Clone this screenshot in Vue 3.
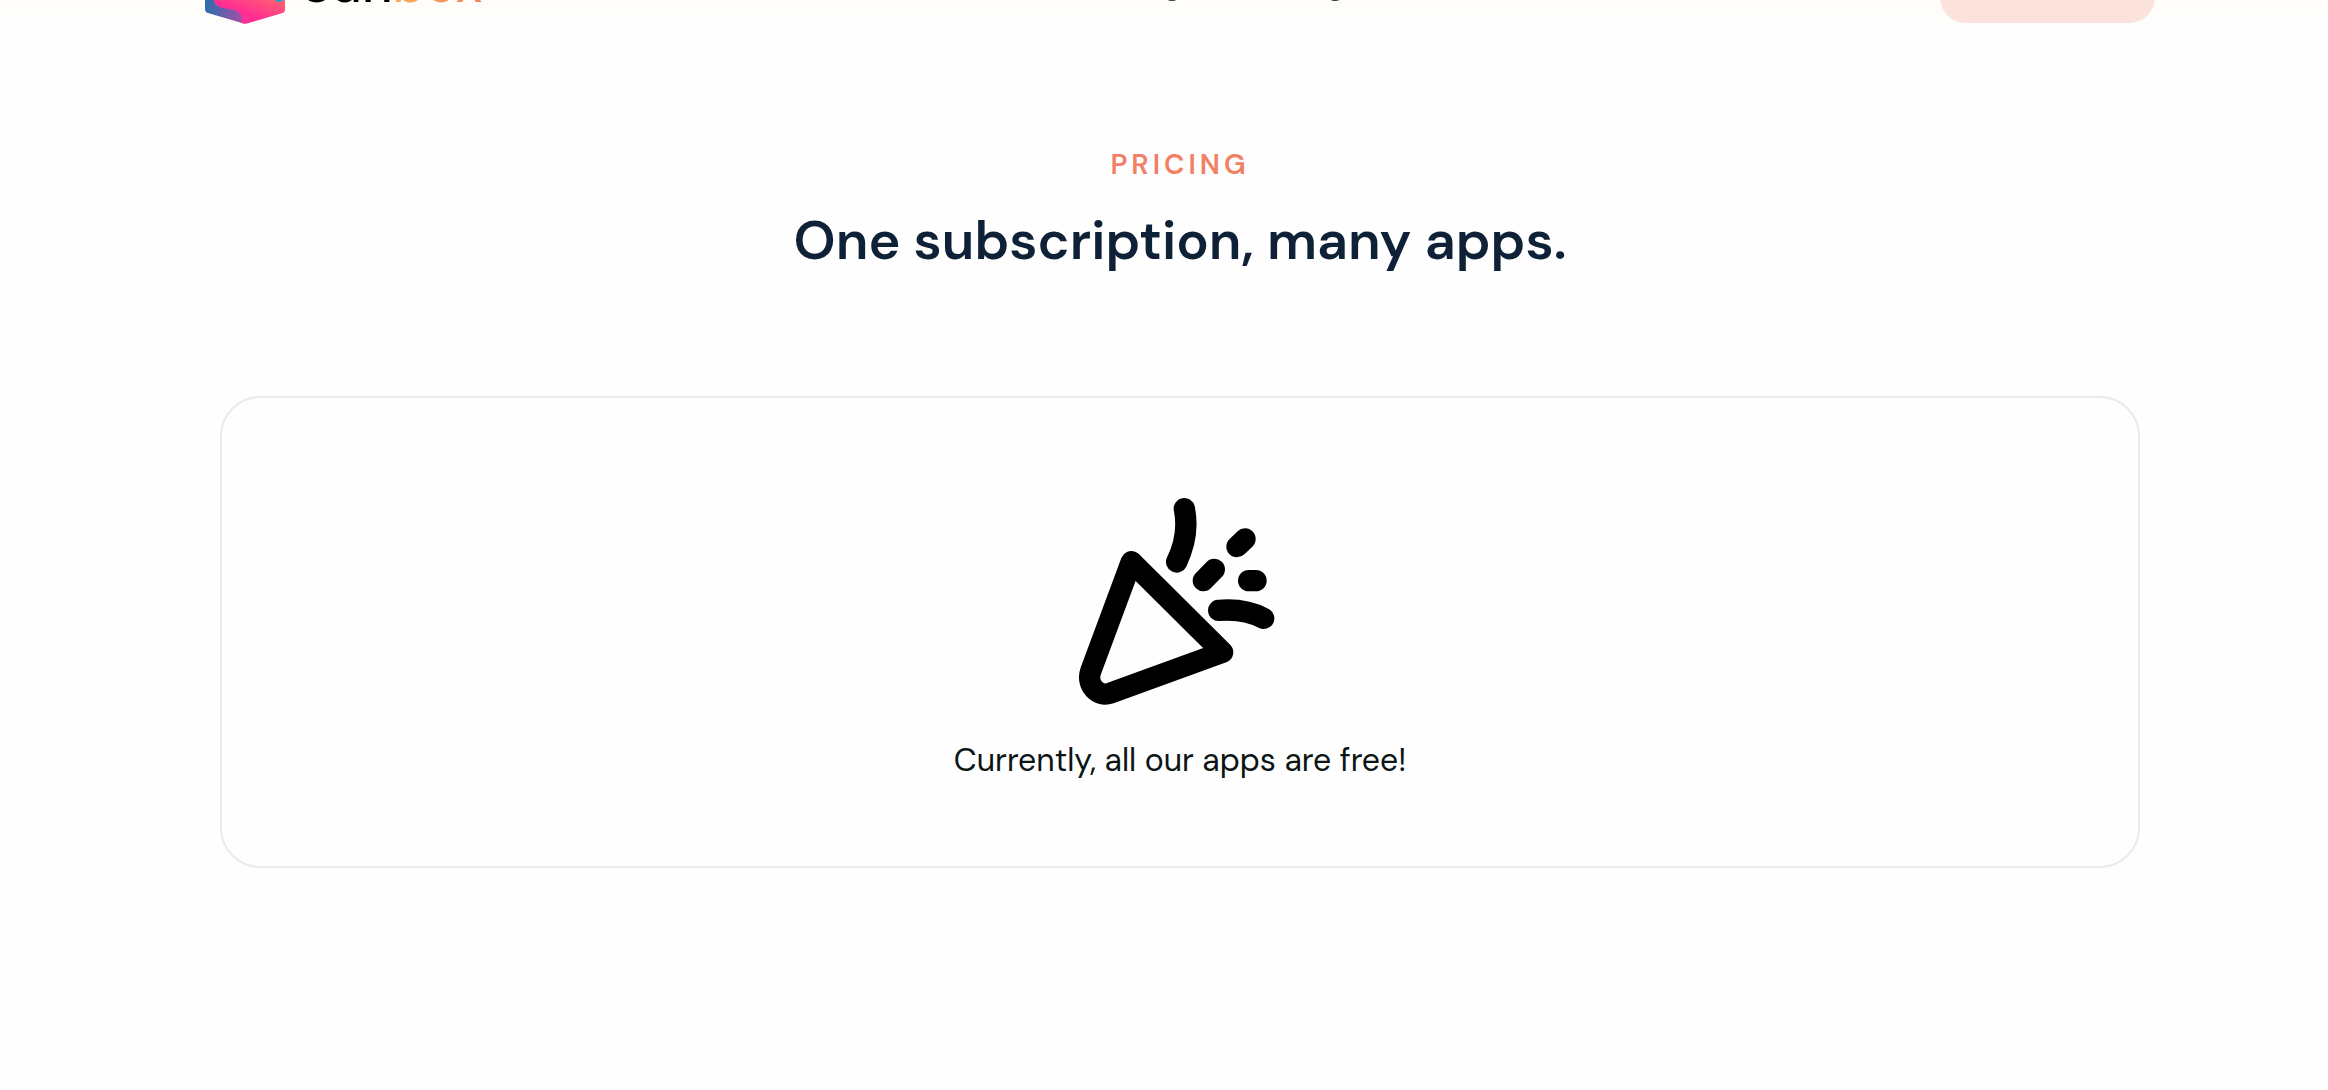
<script setup>
const links = ['Pricing', 'Our blog']
</script>

<template>
  <div class="page">
    <header class="header">
      <div class="bar">
        <a class="brand" href="#">
          <svg class="logo" viewBox="0 0 80 90" aria-hidden="true">
            <defs>
              <linearGradient id="base" x1="0" y1="0" x2="1" y2="0">
                <stop offset="0" stop-color="#2a6fb0" />
                <stop offset="0.45" stop-color="#a04fa8" />
                <stop offset="0.6" stop-color="#ff2f92" />
              </linearGradient>
              <linearGradient id="glow" x1="0.2" y1="1" x2="0.9" y2="0">
                <stop offset="0.3" stop-color="#ff2f92" />
                <stop offset="0.65" stop-color="#ff5578" />
                <stop offset="1" stop-color="#ff8a62" />
              </linearGradient>
              <clipPath id="box">
                <path d="M0 16Q0 14 3 13L37 1Q40 0 43 1L77 13Q80 14 80 16V75Q80 78 77 79L43 89Q40 90 37 89L3 79Q0 78 0 75Z" />
              </clipPath>
            </defs>
            <g clip-path="url(#box)">
              <path d="M0 0H80V90H0Z" fill="url(#base)" />
              <path d="M12 60C4 70 14 74 24 75C36 77 40 82 35 90H80V50H16Z" fill="url(#glow)" />
              <ellipse cx="74" cy="63" rx="5" ry="5" fill="#12a5c4" />
            </g>
          </svg>
          <span class="wordmark">Sun<span class="accent">box</span></span>
        </a>
        <nav class="nav">
          <a v-for="link in links" :key="link" href="#">{{ link }}</a>
        </nav>
        <button class="cta" type="button" aria-label="Get started"></button>
      </div>
    </header>

    <main class="pricing">
      <p class="eyebrow">PRICING</p>
      <h1 class="title">One subscription, many apps.</h1>
      <section class="card">
        <svg class="party" viewBox="15 -6 750 720" aria-hidden="true">
          <path d="M244 245L518 517L180 640C145 652 108 616 122 574Z" />
          <path d="M403 86C414 140 406 192 380 246" />
          <path d="M460 302L493 268M561 200L585 177M596 302H618" />
          <path d="M506 391C555 387 602 394 641 415" />
        </svg>
        <p class="note">Currently, all our apps are free!</p>
      </section>
    </main>
  </div>
</template>

<style>
body {
  margin: 0;
  background: #fefefe;
}
</style>

<style scoped>
.page {
  font-family: "DM Sans", Inter, sans-serif;
  color: #0c1414;
}
.header {
  height: 25px;
  padding-left: 32px;
  overflow: hidden;
  background: linear-gradient(#fffdf9, #fcfdfc);
}
.bar {
  display: grid;
  grid-template-columns: 1fr auto 1fr;
  grid-template-rows: 24px;
  align-items: end;
  max-width: 1950px;
  margin: 0 auto;
}
.brand {
  display: flex;
  align-items: end;
  gap: 16px;
  color: #000;
  text-decoration: none;
}
.logo {
  width: 80px;
  height: 90px;
}
.wordmark {
  font-size: 52px;
  font-weight: 500;
  line-height: 80px;
}
.accent {
  background: linear-gradient(90deg, #f8b050, #f08060);
  background-clip: text;
  color: transparent;
}
.nav {
  display: flex;
  gap: 52px;
  padding: 0 0 16px 76px;
}
.nav a {
  color: #444;
  font-size: 28px;
  line-height: 44px;
  text-decoration: none;
}
.cta {
  justify-self: end;
  width: 215px;
  height: 80px;
  margin-bottom: 1px;
  border: 0;
  border-radius: 26px;
  background: #fbe2dc;
}
.pricing {
  display: flex;
  flex-direction: column;
  align-items: center;
  padding: 120px 0 0 32px;
}
.eyebrow {
  margin: 0;
  color: #f28066;
  font-size: 28px;
  font-weight: 600;
  line-height: 40px;
  letter-spacing: 4px;
}
.title {
  margin: 20px 0 0;
  color: #0e2136;
  font-size: 54px;
  font-weight: 600;
  line-height: 72px;
  text-align: center;
}
.card {
  box-sizing: border-box;
  display: flex;
  flex-direction: column;
  align-items: center;
  width: 84%;
  max-width: 1920px;
  margin-top: 119px;
  padding: 80px 40px 82px;
  border: 2px solid #e8ebea;
  border-radius: 40px;
}
.party {
  width: 250px;
  height: 240px;
  fill: none;
  stroke: #000;
  stroke-width: 64;
  stroke-linecap: round;
  stroke-linejoin: round;
}
.note {
  margin: 18px 0 0;
  font-size: 32px;
  line-height: 48px;
}
</style>
